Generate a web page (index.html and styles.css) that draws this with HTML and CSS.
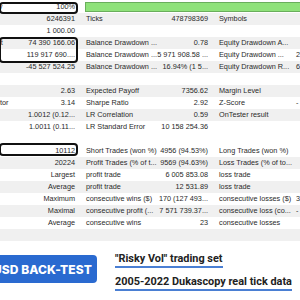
FILE: index.html
```html
<!DOCTYPE html>
<html>
<head>
<meta charset="utf-8">
<link rel="stylesheet" href="styles.css">
</head>
<body>
<div class="page">
  <div class="report">
    <div class="row"><div class="l">History Quality</div><div class="v">100%</div><div class="barcell"><div class="bar"></div></div></div>
    <div class="row alt"><div class="l">Bars</div><div class="v">6246391</div><div class="l2">Ticks</div><div class="v2">478798369</div><div class="l3">Symbols</div><div class="v3"></div></div>
    <div class="row"><div class="l">Initial Deposit</div><div class="v">1 000.00</div><div class="l2"></div><div class="v2"></div><div class="l3"></div><div class="v3"></div></div>
    <div class="row alt"><div class="l">Total Net Profit</div><div class="v">74 390 166.06</div><div class="l2">Balance Drawdown ...</div><div class="v2">0.78</div><div class="l3">Equity Drawdown A...</div><div class="v3"></div></div>
    <div class="row"><div class="l">Gross Profit</div><div class="v">119 917 690....</div><div class="l2">Balance Drawdown ...</div><div class="v2">5 971 908.58 ...</div><div class="l3">Equity Drawdown ...</div><div class="v3">2</div></div>
    <div class="row alt"><div class="l">Gross Loss</div><div class="v">-45 527 524.25</div><div class="l2">Balance Drawdown ...</div><div class="v2">16.94% (1 5...</div><div class="l3">Equity Drawdown R...</div><div class="v3">6</div></div>
    <div class="row"></div>
    <div class="row alt"><div class="l">Profit Factor</div><div class="v">2.63</div><div class="l2">Expected Payoff</div><div class="v2">7356.62</div><div class="l3">Margin Level</div><div class="v3"></div></div>
    <div class="row"><div class="l">Recovery Factor</div><div class="v">3.14</div><div class="l2">Sharpe Ratio</div><div class="v2">2.92</div><div class="l3">Z-Score</div><div class="v3">-</div></div>
    <div class="row alt"><div class="l">AHPR</div><div class="v">1.0012 (0.12...</div><div class="l2">LR Correlation</div><div class="v2">0.59</div><div class="l3">OnTester result</div><div class="v3"></div></div>
    <div class="row"><div class="l">GHPR</div><div class="v">1.0011 (0.11...</div><div class="l2">LR Standard Error</div><div class="v2">10 158 254.36</div><div class="l3"></div><div class="v3"></div></div>
    <div class="row"></div>
    <div class="row"><div class="l">Total Trades</div><div class="v">10112</div><div class="l2">Short Trades (won %)</div><div class="v2">4956 (94.53%)</div><div class="l3">Long Trades (won %)</div><div class="v3"></div></div>
    <div class="row alt"><div class="l">Total Deals</div><div class="v">20224</div><div class="l2">Profit Trades (% of t...</div><div class="v2">9569 (94.63%)</div><div class="l3">Loss Trades (% of to...</div><div class="v3"></div></div>
    <div class="row"><div class="l"></div><div class="v">Largest</div><div class="l2">profit trade</div><div class="v2">6 005 853.08</div><div class="l3">loss trade</div><div class="v3"></div></div>
    <div class="row alt"><div class="l"></div><div class="v">Average</div><div class="l2">profit trade</div><div class="v2">12 531.89</div><div class="l3">loss trade</div><div class="v3"></div></div>
    <div class="row"><div class="l"></div><div class="v">Maximum</div><div class="l2">consecutive wins ($)</div><div class="v2">170 (127 493...</div><div class="l3">consecutive losses ($)</div><div class="v3">3</div></div>
    <div class="row alt"><div class="l"></div><div class="v">Maximal</div><div class="l2">consecutive profit (...</div><div class="v2">7 571 739.37...</div><div class="l3">consecutive loss (co...</div><div class="v3">-</div></div>
    <div class="row"><div class="l"></div><div class="v">Average</div><div class="l2">consecutive wins</div><div class="v2">23</div><div class="l3">consecutive losses</div><div class="v3"></div></div>
    <div class="row alt"></div>

    <div class="mark mark-quality"></div>
    <div class="mark mark-profit"></div>
    <div class="mark mark-trades"></div>
  </div>

  <div class="promo">
    <a class="btn" href="#">USD BACK-TEST</a>
    <div class="links">
      <a class="link" href="#">"Risky Vol" trading set</a>
      <a class="link" href="#">2005-2022 Dukascopy real tick data</a>
    </div>
  </div>
</div>
</body>
</html>
```

FILE: styles.css
```css
* { box-sizing: border-box; }
html, body { margin: 0; padding: 0; background: #fff; }
body { width: 300px; height: 300px; overflow: hidden; }

.page { width: 300px; }

.report {
  position: relative;
  margin-left: -45px;
  padding-top: 1px;
  width: 430px;
  font-family: "Liberation Sans", Arial, sans-serif;
  font-size: 7.3px;
  color: #2a2a2a;
}

.row {
  display: grid;
  grid-template-columns: 65px 57px 73px 60px 82px 89px;
  height: 12px;
  align-items: center;
  white-space: nowrap;
  line-height: 12px;
}
.alt { background: #f0f0f0; }

.v, .v2 { text-align: right; padding-right: 2px; }
.l2, .l3 { padding-left: 9px; }
.v3 { padding-left: 4px; }

.barcell { grid-column: 3 / 7; padding-left: 8px; }
.bar {
  height: 10px;
  background: #8fe27a;
  border: 1px solid #6aae5c;
}

.mark {
  position: absolute;
  border: 2px solid #111;
  border-radius: 4px;
  left: 44px;
  width: 79px;
}
.mark-quality { top: 2px; height: 12px; }
.mark-profit { top: 37px; height: 26px; }
.mark-trades { top: 143px; height: 13px; }

.promo {
  display: flex;
  align-items: flex-start;
  gap: 18px;
  padding-top: 12px;
}

.btn {
  display: flex;
  align-items: center;
  justify-content: flex-end;
  margin-left: -50px;
  margin-top: 2px;
  width: 147px;
  height: 28px;
  padding-right: 5px;
  background: #2a6ad0;
  border-radius: 4px;
  color: #fff;
  font-family: Inter, Roboto, sans-serif;
  font-weight: 800;
  font-size: 12px;
  text-decoration: none;
  letter-spacing: 0.1px;
}

.links {
  display: flex;
  flex-direction: column;
  align-items: flex-start;
  gap: 8px;
}
.link {
  font-family: Roboto, "Noto Sans", sans-serif;
  font-weight: 700;
  font-size: 10.9px;
  line-height: 12px;
  color: #222;
  text-decoration: none;
  padding-bottom: 1px;
  border-bottom: 2px solid #4a7fd3;
}
```
